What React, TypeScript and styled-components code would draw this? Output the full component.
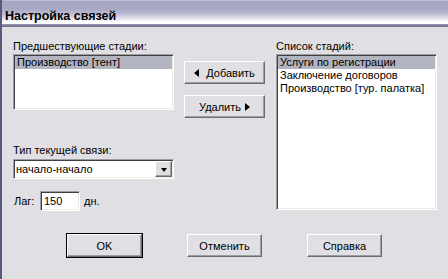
import React from 'react';
import styled, { createGlobalStyle, css } from 'styled-components';

const Global = createGlobalStyle`
  html, body { margin: 0; padding: 0; background: #e0dfe3; }
  body {
    font-family: "Liberation Sans", Arial, sans-serif;
    font-size: 11px;
    color: #000;
  }
`;

const sunken = css`
  box-sizing: border-box;
  border: 1px solid;
  border-color: #9d9da1 #ffffff #ffffff #9d9da1;
  box-shadow: inset 1px 1px 0 #404040, inset -1px -1px 0 #ecebe6;
  background: #ffffff;
`;

const raised = css`
  box-sizing: border-box;
  border: 1px solid;
  border-color: #ffffff #6b6b70 #6b6b70 #ffffff;
  box-shadow: inset -1px -1px 0 #9d9da1;
  background: #e0dfe3;
`;

const Window = styled.div`
  width: 448px;
  height: 279px;
  box-sizing: border-box;
  background: #e0dfe3;
  border-left: 2px solid #5a5a7e;
  display: flex;
  flex-direction: column;
  overflow: hidden;
`;

const TitleBar = styled.div`
  height: 27px;
  box-sizing: border-box;
  padding: 9px 0 0 3px;
  line-height: 14px;
  font-size: 12.5px;
  font-weight: bold;
  color: #000;
  background: linear-gradient(
    to bottom,
    #d6d6e2 0px,
    #a6a6c4 1px,
    #a8a8c5 9px,
    #bdbdd4 14px,
    #e6e6ef 19px,
    #ffffff 22px,
    #ffffff 23.5px,
    #9a9ab4 24px,
    #75758f 26px,
    #75758f 27px
  );
`;

const Body = styled.div`
  display: flex;
  flex-direction: column;
  padding: 13px 11px 0 11px;
`;

const TopArea = styled.div`
  display: flex;
  align-items: flex-start;
`;

const Column = styled.div<{ $w: number; $ml?: number; $pt?: number }>`
  display: flex;
  flex-direction: column;
  width: ${p => p.$w}px;
  margin-left: ${p => p.$ml ?? 0}px;
  padding-top: ${p => p.$pt ?? 0}px;
`;

const Label = styled.div<{ $mt?: number }>`
  height: 13px;
  line-height: 13px;
  margin-top: ${p => p.$mt ?? 0}px;
  white-space: nowrap;
`;

const ListBox = styled.div<{ $h: number }>`
  ${sunken};
  height: ${p => p.$h}px;
  margin-top: 1px;
  padding: 1px;
  display: flex;
  flex-direction: column;
`;

const ListItem = styled.div<{ $selected?: boolean }>`
  height: 13px;
  line-height: 13px;
  padding-left: 2px;
  white-space: nowrap;
  background: ${p => (p.$selected ? '#b2b4bf' : 'transparent')};
`;

const Combo = styled.div`
  ${sunken};
  margin-top: 2px;
  height: 20px;
  padding: 1px;
  display: flex;
  align-items: center;
`;

const ComboText = styled.span`
  padding-left: 1px;
  line-height: 13px;
`;

const DropButton = styled.div`
  ${raised};
  margin-left: auto;
  width: 17px;
  height: 16px;
  display: flex;
  align-items: center;
  justify-content: center;
`;

const DownArrow = styled.span`
  width: 0;
  height: 0;
  border-left: 3.5px solid transparent;
  border-right: 3.5px solid transparent;
  border-top: 4px solid #000;
  margin-top: 1px;
`;

const LagRow = styled.div`
  display: flex;
  align-items: center;
  margin-top: 12px;
  height: 20px;
`;

const LagLabel = styled.span`
  width: 26px;
  padding-left: 1px;
`;

const LagInput = styled.input`
  ${sunken};
  width: 40px;
  height: 20px;
  margin: 0;
  padding: 0 0 0 3px;
  font-family: "Liberation Sans", Arial, sans-serif;
  font-size: 11px;
  color: #000;
  outline: none;
`;

const Unit = styled.span`
  margin-left: 4px;
`;

const Button = styled.button<{ $mt?: number; $gap?: number }>`
  ${raised};
  width: 81px;
  height: 23px;
  margin: ${p => p.$mt ?? 0}px 0 0 0;
  padding: 0;
  font-family: "Liberation Sans", Arial, sans-serif;
  font-size: 11px;
  color: #000;
  display: flex;
  align-items: center;
  justify-content: center;
  gap: ${p => p.$gap ?? 7}px;
  cursor: default;
`;

const DialogButton = styled.button<{ $default?: boolean }>`
  ${raised};
  width: 75px;
  height: 23px;
  margin: 0;
  padding: 0;
  font-family: "Liberation Sans", Arial, sans-serif;
  font-size: 11px;
  color: #000;
  cursor: default;
  ${p =>
    p.$default &&
    css`
      box-shadow: 0 0 0 1px #000, inset -1px -1px 0 #9d9da1;
    `}
`;

const LeftTri = styled.span`
  width: 0;
  height: 0;
  border-top: 4.5px solid transparent;
  border-bottom: 4.5px solid transparent;
  border-right: 5px solid #000;
`;

const RightTri = styled.span`
  width: 0;
  height: 0;
  border-top: 4.5px solid transparent;
  border-bottom: 4.5px solid transparent;
  border-left: 5px solid #000;
`;

const ButtonRow = styled.div`
  display: flex;
  gap: 45px;
  margin-top: 23px;
  padding-left: 54px;
`;

export default function App() {
  return (
    <>
      <Global />
      <Window>
        <TitleBar>Настройка связей</TitleBar>
        <Body>
          <TopArea>
            <Column $w={161}>
              <Label>Предшествующие стадии:</Label>
              <ListBox $h={56}>
                <ListItem $selected>Производство [тент]</ListItem>
              </ListBox>
              <Label $mt={34}>Тип текущей связи:</Label>
              <Combo>
                <ComboText>начало-начало</ComboText>
                <DropButton>
                  <DownArrow />
                </DropButton>
              </Combo>
              <LagRow>
                <LagLabel>Лаг:</LagLabel>
                <LagInput defaultValue="150" readOnly />
                <Unit>дн.</Unit>
              </LagRow>
            </Column>
            <Column $w={81} $ml={10} $pt={21}>
              <Button>
                <LeftTri />
                Добавить
              </Button>
              <Button $mt={11} $gap={4}>
                Удалить
                <RightTri />
              </Button>
            </Column>
            <Column $w={161} $ml={11}>
              <Label>Список стадий:</Label>
              <ListBox $h={156}>
                <ListItem $selected>Услуги по регистрации</ListItem>
                <ListItem>Заключение договоров</ListItem>
                <ListItem>Производство [тур. палатка]</ListItem>
              </ListBox>
            </Column>
          </TopArea>
          <ButtonRow>
            <DialogButton $default>OK</DialogButton>
            <DialogButton>Отменить</DialogButton>
            <DialogButton>Справка</DialogButton>
          </ButtonRow>
        </Body>
      </Window>
    </>
  );
}
